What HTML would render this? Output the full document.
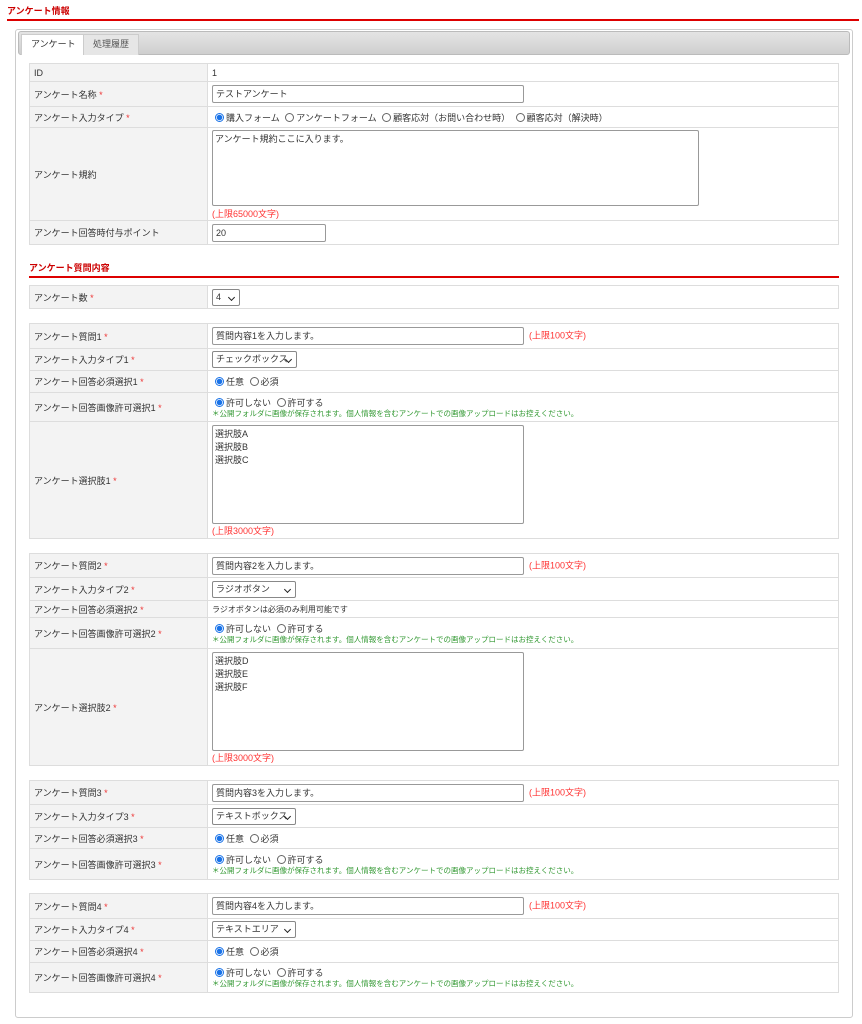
<!DOCTYPE html>
<html><head><meta charset="utf-8"><style>
*{box-sizing:border-box;margin:0;padding:0}
body{width:862px;height:1024px;background:#fff;font-family:"Liberation Sans","Noto Sans CJK JP",sans-serif;font-size:9px;color:#333;position:relative;overflow:hidden}
.a{position:absolute}
.h{color:#c00;font-weight:bold;font-size:9px}
.line{height:2px;background:#d00}
.box{left:15px;top:29px;width:838px;height:989px;border:1px solid #ccc;border-radius:3px}
.tabbar{left:18px;top:31px;width:832px;height:24px;background:linear-gradient(#e4e4e4,#cfcfcf);border:1px solid #bbb;border-radius:3px}
.tab{top:34px;height:21px;padding:0 9px;line-height:19px;font-size:9px;border:1px solid #ccc;border-bottom:none}
table{position:absolute;left:29px;width:810px;border-collapse:collapse}
td{border:1px solid #ddd;padding:0 4px;vertical-align:middle;font-size:9px}
td.l{width:178px;background:#f3f3f3;color:#333}
.r{color:#e33}
.in{display:inline-block;border:1px solid #999;border-radius:2px;height:18px;line-height:16px;padding:0 3px;background:#fff;vertical-align:middle;font-size:9px}
.ta{display:block;border:1px solid #999;border-radius:2px;background:#fff;padding:2px 2px;line-height:13px;font-size:9px}
.sel{display:inline-block;border:1px solid #888;border-radius:2px;height:17px;line-height:15px;padding:0 3px;background:#fff;vertical-align:middle;position:relative;font-size:9px}
.sel:after{content:"";position:absolute;right:5px;top:5px;width:4px;height:4px;border-right:1.5px solid #222;border-bottom:1.5px solid #222;transform:rotate(45deg)}
.rd{display:inline-block;width:9px;height:9px;border:1px solid #666;border-radius:50%;vertical-align:-1px;margin:0 2px 0 3px;background:#fff}
.rd.on{border:1px solid #1a73e8;background:radial-gradient(#1a73e8 0 2.5px,#fff 3px)}
.lim{color:#f33;font-size:9px}
.g{color:#393;font-size:7.5px;line-height:10px}
</style></head><body>
<div class="a h" style="left:7px;top:4px">アンケート情報</div>
<div class="a line" style="left:7px;top:19px;width:852px"></div>
<div class="a box"></div>
<div class="a tabbar"></div>
<div class="a tab" style="left:21px;background:#fff;color:#333">アンケート</div>
<div class="a tab" style="left:83px;background:#e6e6e6;color:#555">処理履歴</div>

<table style="top:63px">
<tr style="height:18px"><td class="l">ID</td><td>1</td></tr>
<tr style="height:25px"><td class="l">アンケート名称 <span class="r">*</span></td><td><span class="in" style="width:312px">テストアンケート</span></td></tr>
<tr style="height:21px"><td class="l">アンケート入力タイプ <span class="r">*</span></td><td><span class="rd on"></span>購入フォーム <span class="rd"></span>アンケートフォーム <span class="rd"></span>顧客応対（お問い合わせ時） <span class="rd"></span>顧客応対（解決時）</td></tr>
<tr style="height:92px"><td class="l">アンケート規約</td><td><div class="ta" style="width:487px;height:76px;margin-top:2px">アンケート規約ここに入ります。</div><div class="lim" style="margin-top:1px">(上限65000文字)</div></td></tr>
<tr style="height:24px"><td class="l">アンケート回答時付与ポイント</td><td><span class="in" style="width:114px">20</span></td></tr>
</table>

<div class="a h" style="left:29px;top:261px">アンケート質問内容</div>
<div class="a line" style="left:29px;top:276px;width:810px"></div>

<table style="top:285px">
<tr style="height:23px"><td class="l">アンケート数 <span class="r">*</span></td><td><span class="sel" style="width:28px">4</span></td></tr>
</table>

<table style="top:323px">
<tr style="height:25px"><td class="l">アンケート質問1 <span class="r">*</span></td><td><span class="in" style="width:312px">質問内容1を入力します。</span> <span class="lim">&nbsp;(上限100文字)</span></td></tr>
<tr style="height:22px"><td class="l">アンケート入力タイプ1 <span class="r">*</span></td><td><span class="sel" style="width:85px">チェックボックス</span></td></tr>
<tr style="height:22px"><td class="l">アンケート回答必須選択1 <span class="r">*</span></td><td><span class="rd on"></span>任意 <span class="rd"></span>必須</td></tr>
<tr style="height:29px"><td class="l">アンケート回答画像許可選択1 <span class="r">*</span></td><td><span class="rd on"></span>許可しない <span class="rd"></span>許可する<div class="g">＊公開フォルダに画像が保存されます。個人情報を含むアンケートでの画像アップロードはお控えください。</div></td></tr>
<tr style="height:117px"><td class="l">アンケート選択肢1 <span class="r">*</span></td><td><div class="ta" style="width:312px;height:99px;margin-top:2px">選択肢A<br>選択肢B<br>選択肢C</div><div class="lim">(上限3000文字)</div></td></tr>
</table>

<table style="top:553px">
<tr style="height:24px"><td class="l">アンケート質問2 <span class="r">*</span></td><td><span class="in" style="width:312px">質問内容2を入力します。</span> <span class="lim">&nbsp;(上限100文字)</span></td></tr>
<tr style="height:23px"><td class="l">アンケート入力タイプ2 <span class="r">*</span></td><td><span class="sel" style="width:84px">ラジオボタン</span></td></tr>
<tr style="height:17px"><td class="l">アンケート回答必須選択2 <span class="r">*</span></td><td style="font-size:8px">ラジオボタンは必須のみ利用可能です</td></tr>
<tr style="height:31px"><td class="l">アンケート回答画像許可選択2 <span class="r">*</span></td><td><span class="rd on"></span>許可しない <span class="rd"></span>許可する<div class="g">＊公開フォルダに画像が保存されます。個人情報を含むアンケートでの画像アップロードはお控えください。</div></td></tr>
<tr style="height:117px"><td class="l">アンケート選択肢2 <span class="r">*</span></td><td><div class="ta" style="width:312px;height:99px;margin-top:2px">選択肢D<br>選択肢E<br>選択肢F</div><div class="lim">(上限3000文字)</div></td></tr>
</table>

<table style="top:780px">
<tr style="height:24px"><td class="l">アンケート質問3 <span class="r">*</span></td><td><span class="in" style="width:312px">質問内容3を入力します。</span> <span class="lim">&nbsp;(上限100文字)</span></td></tr>
<tr style="height:23px"><td class="l">アンケート入力タイプ3 <span class="r">*</span></td><td><span class="sel" style="width:84px">テキストボックス</span></td></tr>
<tr style="height:21px"><td class="l">アンケート回答必須選択3 <span class="r">*</span></td><td><span class="rd on"></span>任意 <span class="rd"></span>必須</td></tr>
<tr style="height:31px"><td class="l">アンケート回答画像許可選択3 <span class="r">*</span></td><td><span class="rd on"></span>許可しない <span class="rd"></span>許可する<div class="g">＊公開フォルダに画像が保存されます。個人情報を含むアンケートでの画像アップロードはお控えください。</div></td></tr>
</table>

<table style="top:893px">
<tr style="height:25px"><td class="l">アンケート質問4 <span class="r">*</span></td><td><span class="in" style="width:312px">質問内容4を入力します。</span> <span class="lim">&nbsp;(上限100文字)</span></td></tr>
<tr style="height:22px"><td class="l">アンケート入力タイプ4 <span class="r">*</span></td><td><span class="sel" style="width:84px">テキストエリア</span></td></tr>
<tr style="height:22px"><td class="l">アンケート回答必須選択4 <span class="r">*</span></td><td><span class="rd on"></span>任意 <span class="rd"></span>必須</td></tr>
<tr style="height:30px"><td class="l">アンケート回答画像許可選択4 <span class="r">*</span></td><td><span class="rd on"></span>許可しない <span class="rd"></span>許可する<div class="g">＊公開フォルダに画像が保存されます。個人情報を含むアンケートでの画像アップロードはお控えください。</div></td></tr>
</table>
</body></html>
